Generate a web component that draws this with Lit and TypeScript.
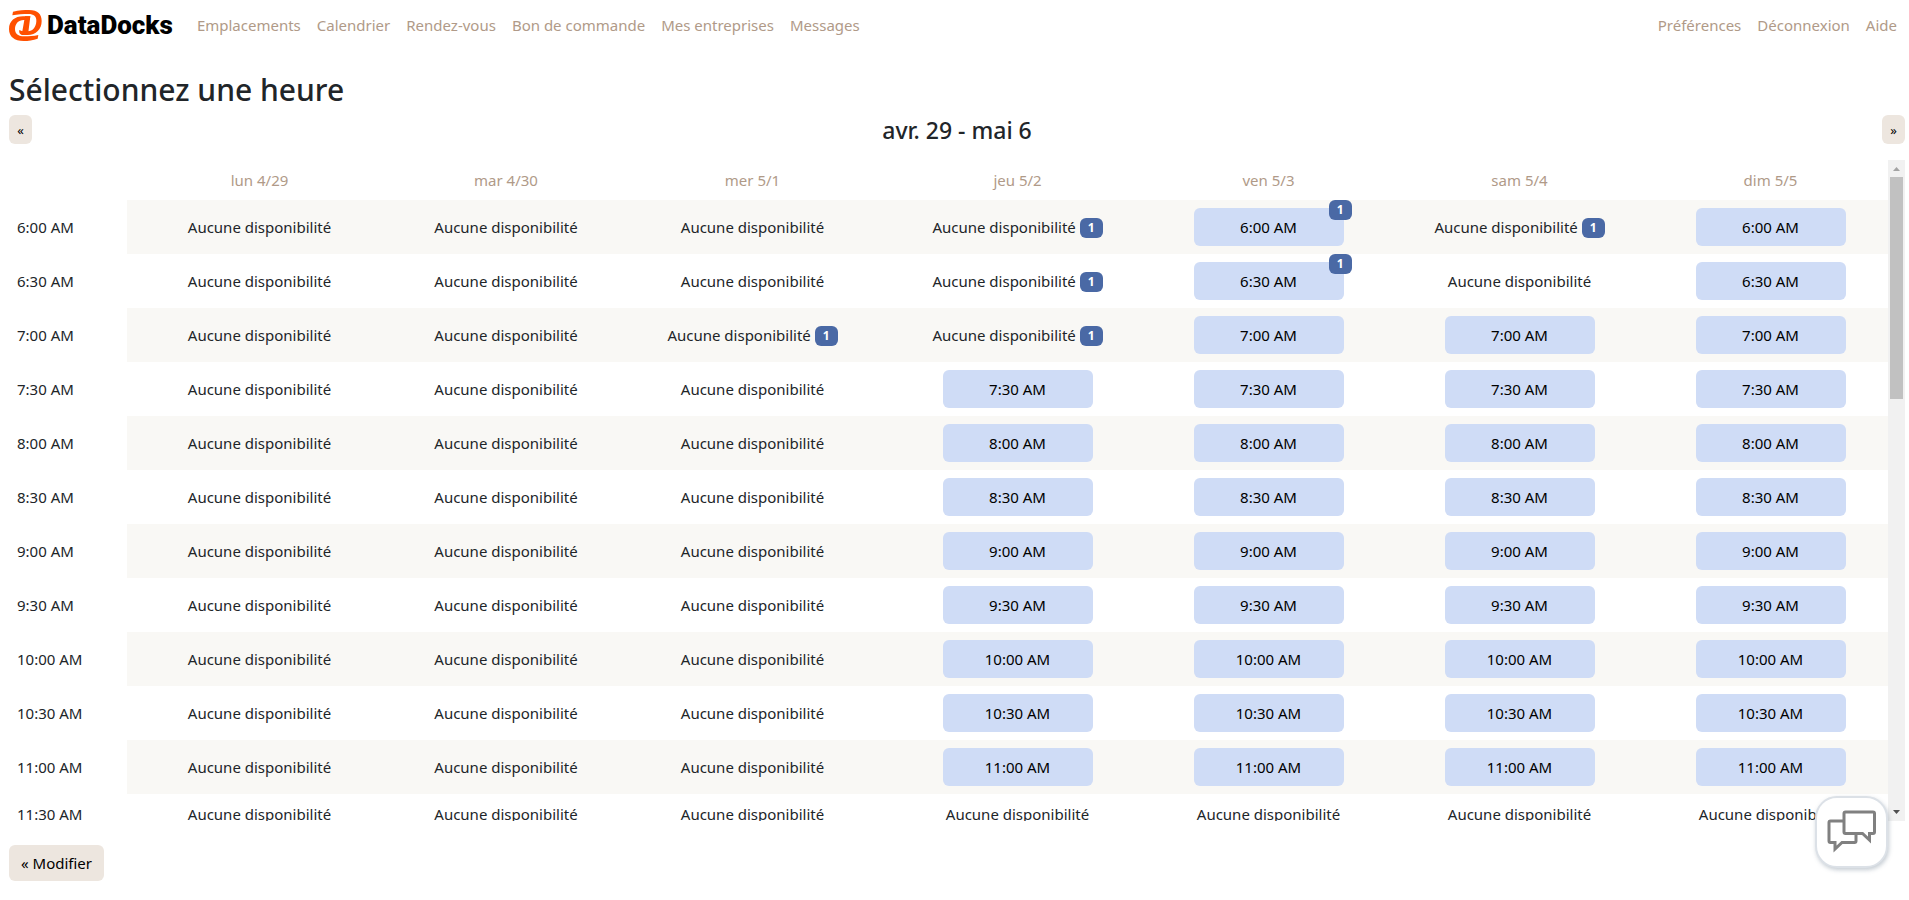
import { LitElement, html, css, svg } from "lit";
import { customElement } from "lit/decorators.js";

const NAV = ["Emplacements", "Calendrier", "Rendez-vous", "Bon de commande", "Mes entreprises", "Messages"];
const ACCOUNT = ["Préférences", "Déconnexion", "Aide"];
const DAYS = ["lun 4/29", "mar 4/30", "mer 5/1", "jeu 5/2", "ven 5/3", "sam 5/4", "dim 5/5"];

interface Slot { open: boolean; count?: number }
interface Row { time: string; slots: Slot[] }

/* "-" or "X" closed, "o" or "O" open; an upper-case letter marks one booked appointment */
const PATTERNS: [string, string][] = [
  ["6:00 AM", "---XOXo"],
  ["6:30 AM", "---XO-o"],
  ["7:00 AM", "--XXooo"],
  ["7:30 AM", "---oooo"],
  ["8:00 AM", "---oooo"],
  ["8:30 AM", "---oooo"],
  ["9:00 AM", "---oooo"],
  ["9:30 AM", "---oooo"],
  ["10:00 AM", "---oooo"],
  ["10:30 AM", "---oooo"],
  ["11:00 AM", "---oooo"],
  ["11:30 AM", "-------"],
];

const ROWS: Row[] = PATTERNS.map(([time, p]) => ({
  time,
  slots: [...p].map((c) => ({
    open: c.toLowerCase() === "o",
    count: c === "X" || c === "O" ? 1 : undefined,
  })),
}));

@customElement("app-root")
export class AppRoot extends LitElement {
  static styles = css`
    :host {
      display: flex;
      flex-direction: column;
      box-sizing: border-box;
      height: 100vh;
      padding: 0 4px 19px 9px;
      background: #fff;
      color: #212529;
      font: 15px/24px "Noto Sans", "Open Sans", sans-serif;
    }
    * { box-sizing: border-box; }
    a { text-decoration: none; }
    button { font: inherit; border: 0; cursor: pointer; color: #000; }
    .top { display: flex; align-items: center; height: 50px; padding-right: 8px; }
    .brand { display: flex; align-items: center; gap: 4px; margin-right: 24px; color: #000; font: 900 26px/30px Roboto, sans-serif; }
    .links { display: flex; gap: 16px; }
    .links a { color: #b09a88; }
    .account { margin-left: auto; }
    h1 { margin: 21px 0 6px; font-size: 30px; line-height: 38px; font-weight: 500; }
    .week { display: flex; justify-content: space-between; align-items: flex-start; height: 45px; }
    h2 { margin: 0; font-size: 23px; line-height: 30px; font-weight: 500; }
    .step { width: 23px; height: 29px; padding: 0; border-radius: 6px; background: #ede6df; font-size: 13px; }
    .pane { display: flex; flex: 1; min-height: 0; }
    .scroll { flex: 1; overflow-y: scroll; scrollbar-width: none; }
    table { width: 100%; table-layout: fixed; border-collapse: collapse; }
    th, td { padding: 8px; text-align: center; font-weight: 400; }
    thead th { color: #b09a88; line-height: 24px; }
    tbody th { text-align: left; }
    tbody tr:nth-child(odd) td { background: #f9f8f5; }
    .time { width: 118px; }
    .wide { width: 265px; }
    .narrow { width: 228px; }
    .mid { width: 237px; }
    .slot { position: relative; display: inline-block; width: 150px; height: 38px; padding: 0; border-radius: 6px; background: #cfdcf6; vertical-align: top; }
    .badge { display: inline-block; height: 20px; padding: 0 8px; border-radius: 6px; background: #4a69a5; color: #fff; font-size: 12px; line-height: 20px; font-weight: 700; vertical-align: top; margin-top: 3px; }
    .slot .badge { position: absolute; top: -8px; right: -8px; margin: 0; }
    .bar { display: flex; flex-direction: column; width: 17px; background: #f1f1f1; }
    .bar svg { display: block; flex: none; }
    .track { display: flex; flex-direction: column; flex: 1; padding: 0 2px; }
    .thumb { flex: 222; background: #c1c1c1; }
    .rest { flex: 405; }
    .edit { align-self: flex-start; margin-top: 24px; height: 36px; padding: 0 12px; border-radius: 6px; background: #ede6df; }
    .chat { position: fixed; right: 21px; bottom: 32px; display: grid; place-items: center; width: 73px; height: 72px; padding: 0; border: 2px solid #dce1e7; border-radius: 22px; background: #fff; box-shadow: 1px 2px 4px rgba(90, 110, 130, 0.35); }
  `;

  private badge(n?: number) {
    return n ? html`<span class="badge">${n}</span>` : "";
  }

  private cell(time: string, s: Slot) {
    return s.open
      ? html`<td><button class="slot">${time}${this.badge(s.count)}</button></td>`
      : html`<td>Aucune disponibilité ${this.badge(s.count)}</td>`;
  }

  private arrow(d: string, fill: string) {
    return html`<svg width="17" height="17" viewBox="0 0 17 17">${svg`<path d=${d} fill=${fill} />`}</svg>`;
  }

  render() {
    return html`
      <header class="top">
        <a class="brand" href="#">
          <svg width="34" height="31" viewBox="0 0 102 93" fill="#ff5000" aria-hidden="true">
            <path d="M12 5C30 1 46 0 60 0C87 0 98 13 98 33C98 58 81 75 56 75H38L40 64H56C71 64 81 52 82 34C83 19 74 12 58 12C42 12 26 13 10 16Z" />
            <path d="M64 19L62 30H44C28 31 18 41 18 57C18 72 28 79 46 79C60 79 74 78 88 75L86 86C72 91 58 93 44 93C16 93 0 80 0 57C0 33 18 19 42 19Z" />
            <path d="M48 19H64L57 75H44C34 75 29 69 31 60L40 64Z" />
          </svg>
          <span>DataDocks</span>
        </a>
        <nav class="links">${NAV.map((t) => html`<a href="#">${t}</a>`)}</nav>
        <nav class="links account">${ACCOUNT.map((t) => html`<a href="#">${t}</a>`)}</nav>
      </header>
      <h1>Sélectionnez une heure</h1>
      <div class="week">
        <button class="step">«</button>
        <h2>avr. 29 - mai 6</h2>
        <button class="step">»</button>
      </div>
      <div class="pane">
        <div class="scroll">
          <table>
            <colgroup>
              <col class="time" /><col class="wide" /><col class="narrow" /><col class="wide" />
              <col class="wide" /><col class="mid" /><col class="wide" /><col class="mid" />
            </colgroup>
            <thead><tr><th></th>${DAYS.map((d) => html`<th scope="col">${d}</th>`)}</tr></thead>
            <tbody>
              ${ROWS.map((r) => html`<tr><th scope="row">${r.time}</th>${r.slots.map((s) => this.cell(r.time, s))}</tr>`)}
            </tbody>
          </table>
        </div>
        <div class="bar" aria-hidden="true">
          ${this.arrow("M5 11h7L8.500 7z", "#a3a3a3")}
          <div class="track"><div class="thumb"></div><div class="rest"></div></div>
          ${this.arrow("M5 6h7L8.500 10z", "#505050")}
        </div>
      </div>
      <button class="edit">« Modifier</button>
      <button class="chat" aria-label="Chat">
        <svg width="50" height="44" viewBox="0 0 50 44" fill="none" stroke="#808080" stroke-width="3">
          <path d="M17 11H3.500Q2 11 2 12.500V31Q2 32.500 3.500 32.500H8V39L15 32.500H27.500Q29 32.500 29 31V25" />
          <path d="M18.500 2H46Q47.500 2 47.500 3.500V22Q47.500 23.500 46 23.500H42.500V30L35.500 23.500H18.500Q17 23.500 17 22V3.500Q17 2 18.500 2Z" />
        </svg>
      </button>
    `;
  }
}
